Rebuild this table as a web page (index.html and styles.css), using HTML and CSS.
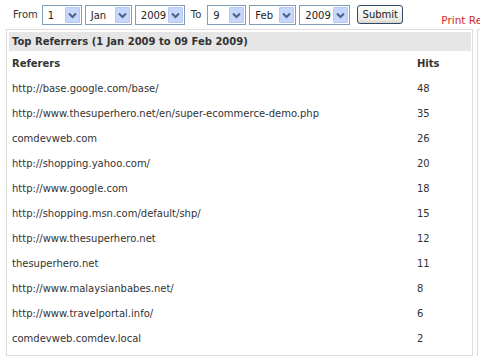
FILE: index.html
```html
<!DOCTYPE html>
<html>
<head>
<meta charset="utf-8">
<link rel="stylesheet" href="styles.css">
</head>
<body>
<div class="toolbar">
  <span class="label">From</span>
  <div class="sel w40"><span class="val">1</span><span class="arr"><svg width="9" height="7" viewBox="0 0 9 7"><path d="M1 1.5 L4.5 5 L8 1.5" fill="none" stroke="#4d6185" stroke-width="2"/></svg></span></div>
  <div class="sel w46"><span class="val">Jan</span><span class="arr"><svg width="9" height="7" viewBox="0 0 9 7"><path d="M1 1.5 L4.5 5 L8 1.5" fill="none" stroke="#4d6185" stroke-width="2"/></svg></span></div>
  <div class="sel w50"><span class="val">2009</span><span class="arr"><svg width="9" height="7" viewBox="0 0 9 7"><path d="M1 1.5 L4.5 5 L8 1.5" fill="none" stroke="#4d6185" stroke-width="2"/></svg></span></div>
  <span class="label to">To</span>
  <div class="sel w39"><span class="val">9</span><span class="arr"><svg width="9" height="7" viewBox="0 0 9 7"><path d="M1 1.5 L4.5 5 L8 1.5" fill="none" stroke="#4d6185" stroke-width="2"/></svg></span></div>
  <div class="sel w47"><span class="val">Feb</span><span class="arr"><svg width="9" height="7" viewBox="0 0 9 7"><path d="M1 1.5 L4.5 5 L8 1.5" fill="none" stroke="#4d6185" stroke-width="2"/></svg></span></div>
  <div class="sel w51"><span class="val">2009</span><span class="arr"><svg width="9" height="7" viewBox="0 0 9 7"><path d="M1 1.5 L4.5 5 L8 1.5" fill="none" stroke="#4d6185" stroke-width="2"/></svg></span></div>
  <button class="submit">Submit</button>
  <a class="print">Print Report</a>
</div>
<div class="panels">
  <div class="box">
    <div class="title">Top Referrers (1 Jan 2009 to 09 Feb 2009)</div>
    <div class="table">
      <div class="row head"><span>Referers</span><span>Hits</span></div>
      <div class="row"><span>http://base.google.com/base/</span><span>48</span></div>
      <div class="row"><span>http://www.thesuperhero.net/en/super-ecommerce-demo.php</span><span>35</span></div>
      <div class="row"><span>comdevweb.com</span><span>26</span></div>
      <div class="row"><span>http://shopping.yahoo.com/</span><span>20</span></div>
      <div class="row"><span>http://www.google.com</span><span>18</span></div>
      <div class="row"><span>http://shopping.msn.com/default/shp/</span><span>15</span></div>
      <div class="row"><span>http://www.thesuperhero.net</span><span>12</span></div>
      <div class="row"><span>thesuperhero.net</span><span>11</span></div>
      <div class="row"><span>http://www.malaysianbabes.net/</span><span>8</span></div>
      <div class="row"><span>http://www.travelportal.info/</span><span>6</span></div>
      <div class="row"><span>comdevweb.comdev.local</span><span>2</span></div>
    </div>
  </div>
  <div class="box2"></div>
</div>
</body>
</html>
```

FILE: styles.css
```css
html, body {
  margin: 0;
  padding: 0;
  overflow: hidden;
  background: #fff;
}
body {
  font-family: "DejaVu Sans", Verdana, sans-serif;
  font-size: 10px;
  color: #333;
  width: 480px;
  height: 359px;
}
.toolbar {
  display: flex;
  align-items: flex-start;
  height: 29px;
  padding: 5px 0 0 13px;
  box-sizing: border-box;
  white-space: nowrap;
}
.toolbar > * {
  flex-shrink: 0;
}
.label {
  line-height: 20px;
  margin-right: 4px;
  color: #333;
}
.label.to {
  margin-left: 3px;
  margin-right: 6px;
}
.sel {
  display: flex;
  align-items: center;
  justify-content: space-between;
  height: 20px;
  box-sizing: border-box;
  border: 1px solid #7f9db9;
  background: #fff;
  margin-right: 3px;
  padding: 1px;
}
.sel .val {
  padding-left: 4px;
  color: #222;
}
.sel .arr {
  display: flex;
  align-items: center;
  justify-content: center;
  width: 15px;
  height: 16px;
  box-sizing: border-box;
  background: #c6d6fc;
  border: 1px solid #b7c9f3;
  border-radius: 1px;
}
.w40 { width: 40px; }
.w46 { width: 47px; }
.w50 { width: 50px; }
.w39 { width: 39px; }
.w47 { width: 47px; }
.w51 { width: 51px; }
.submit {
  margin-left: 4px;
  width: 46px;
  height: 19px;
  padding: 0;
  font-family: inherit;
  font-size: 10px;
  color: #222;
  border: 1px solid #2c4a6e;
  border-radius: 3px;
  background: linear-gradient(#ffffff, #ecebe6 80%, #d6d0c5);
}
.print {
  margin-left: 38px;
  margin-top: 9px;
  color: #cc2b2b;
  font-size: 10.5px;
}
.panels {
  display: flex;
  align-items: flex-start;
}
.box {
  flex-shrink: 0;
  margin-left: 6px;
  width: 467px;
  height: 327px;
  box-sizing: border-box;
  border: 1px solid #dcdcdc;
  padding: 2px 1px 0 2px;
}
.box2 {
  flex-shrink: 0;
  margin-left: 4px;
  width: 20px;
  height: 327px;
  border-left: 1px solid #dcdcdc;
  border-top: 1px solid #dcdcdc;
  box-sizing: border-box;
}
.title {
  background: #e6e6e6;
  height: 19px;
  line-height: 19px;
  padding-left: 3px;
  font-weight: bold;
  color: #333;
}
.table {
  display: flex;
  flex-direction: column;
}
.row {
  display: grid;
  grid-template-columns: 405px 1fr;
  height: 25px;
  align-items: center;
  padding-left: 3px;
  color: #333;
}
.row.head {
  font-weight: bold;
}
```
